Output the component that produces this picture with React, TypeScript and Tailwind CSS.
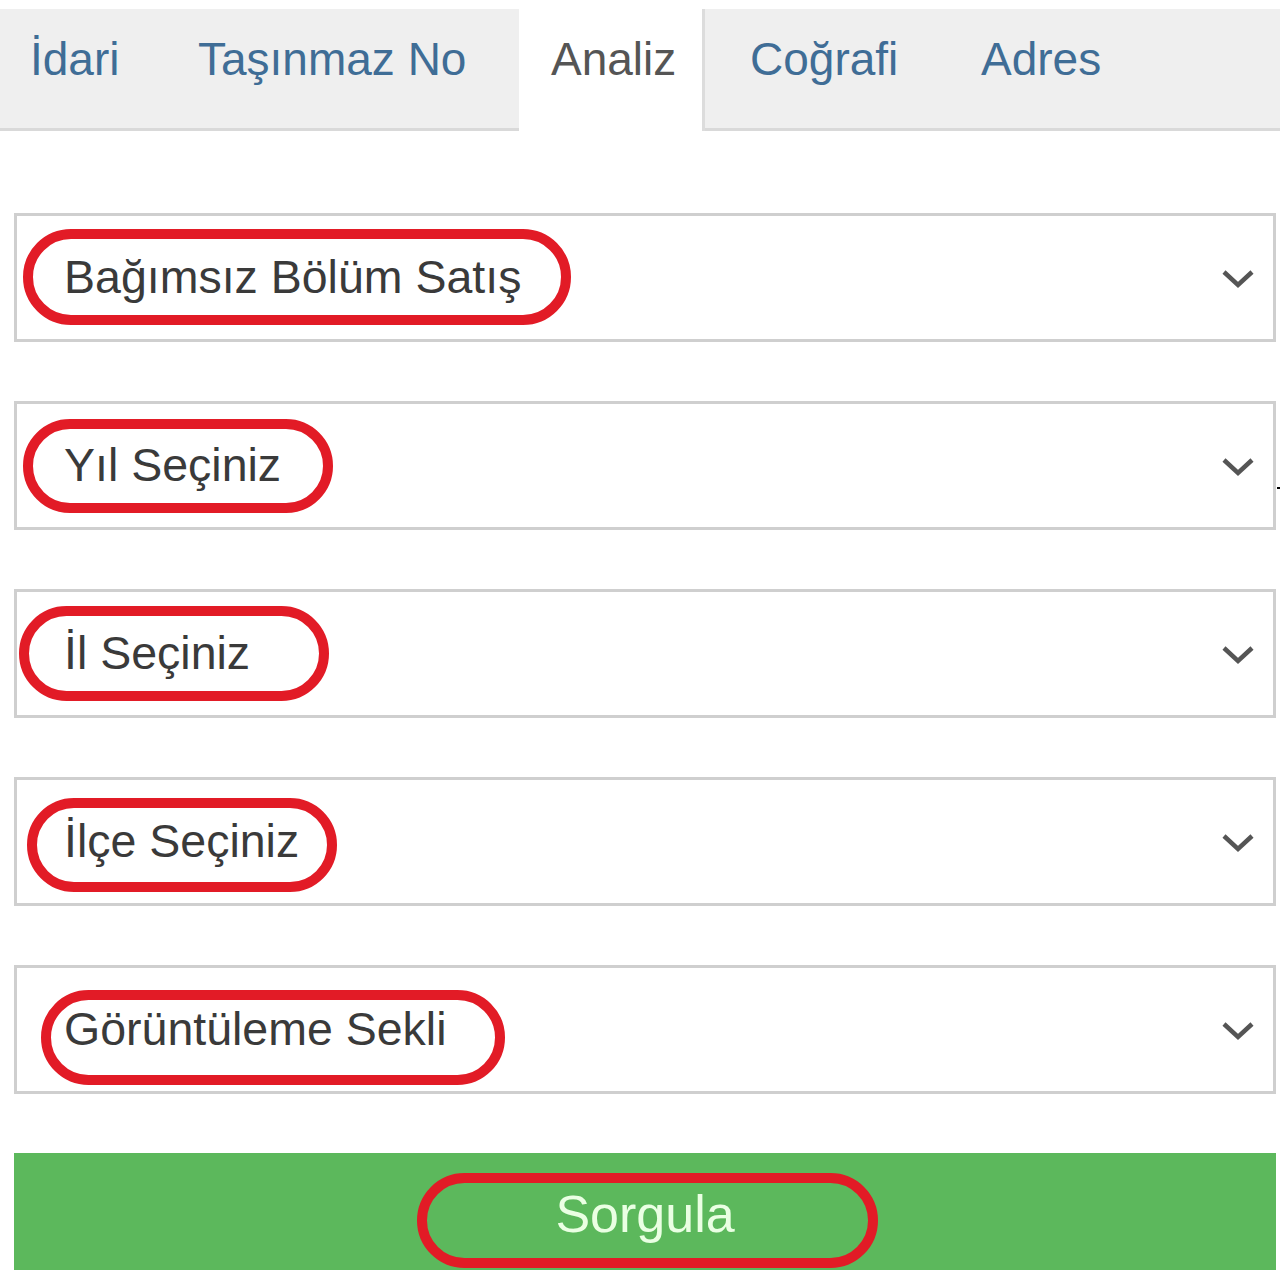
const FONT = { fontFamily: '"Liberation Sans", Arial, sans-serif' };

type Field = {
  label: string;
  ring: string;
};

const FIELDS: Field[] = [
  { label: 'Bağımsız Bölüm Satış', ring: 'top-[13px] left-[6px] w-[548px] h-[96px]' },
  { label: 'Yıl Seçiniz', ring: 'top-[15px] left-[6px] w-[310px] h-[94px]' },
  { label: 'İl Seçiniz', ring: 'top-[14px] left-[2px] w-[310px] h-[95px]' },
  { label: 'İlçe Seçiniz', ring: 'top-[18px] left-[10px] w-[310px] h-[94px]' },
  { label: 'Görüntüleme Sekli', ring: 'top-[22px] left-[24px] w-[464px] h-[95px]' },
];

function Chevron() {
  return (
    <svg width="32" height="20" viewBox="0 0 32 20" className="mt-[3px]">
      <polyline points="2,3 16,16 30,3" fill="none" stroke="#555" strokeWidth="4.5" />
    </svg>
  );
}

function Tabs() {
  return (
    <div className="mt-[9px] flex h-[122px] text-[46px] leading-none" style={FONT}>
      <div className="flex w-[519px] bg-[#efefef] border-b-[3px] border-[#d9d9d9]">
        <div className="w-[166px] pl-[30px] pt-[27px] text-[#3f6d96]">İdari</div>
        <div className="pl-[32px] pt-[27px] text-[#3f6d96]">Taşınmaz No</div>
      </div>
      <div className="w-[186px] pl-[32px] pt-[27px] bg-white border-r-[3px] border-[#dcdcdc] text-[#555]">
        Analiz
      </div>
      <div className="flex flex-1 bg-[#efefef] border-b-[3px] border-[#d9d9d9]">
        <div className="w-[230px] pl-[45px] pt-[27px] text-[#3f6d96]">Coğrafi</div>
        <div className="pl-[46px] pt-[27px] text-[#3f6d96]">Adres</div>
      </div>
    </div>
  );
}

function SelectBox({ field }: { field: Field }) {
  return (
    <div className="relative flex h-[129px] items-center justify-between border-[3px] border-[#cfcfcf] bg-white pl-[47px] pr-[19px]">
      <span className="text-[46.5px] leading-none text-[#3a3a3a]" style={FONT}>
        {field.label}
      </span>
      <Chevron />
      <div className={`absolute rounded-full border-[10px] border-[#e21b26] ${field.ring}`} />
    </div>
  );
}

export default function App() {
  return (
    <div className="w-[1280px] h-[1280px] bg-white overflow-hidden">
      <Tabs />

      <div className="relative mt-[82px] flex flex-col gap-[59px] px-[14px] pr-[4px]">
        {FIELDS.map((f) => (
          <SelectBox key={f.label} field={f} />
        ))}
        <span className="absolute right-0 top-[274px] h-[2px] w-[3px] bg-black" />
      </div>

      {/* Sorgula button */}
      <div className="mx-[14px] mr-[4px] mt-[59px]">
        <button
          className="relative flex h-[117px] w-full items-center justify-center bg-[#5cb85c] text-[52px] leading-none text-[#eaffe3]"
          style={FONT}
        >
          <span className="mt-[4px]">Sorgula</span>
          <span className="absolute top-[20px] left-[403px] h-[95px] w-[461px] rounded-full border-[10px] border-[#e21b26]" />
        </button>
      </div>
    </div>
  );
}
